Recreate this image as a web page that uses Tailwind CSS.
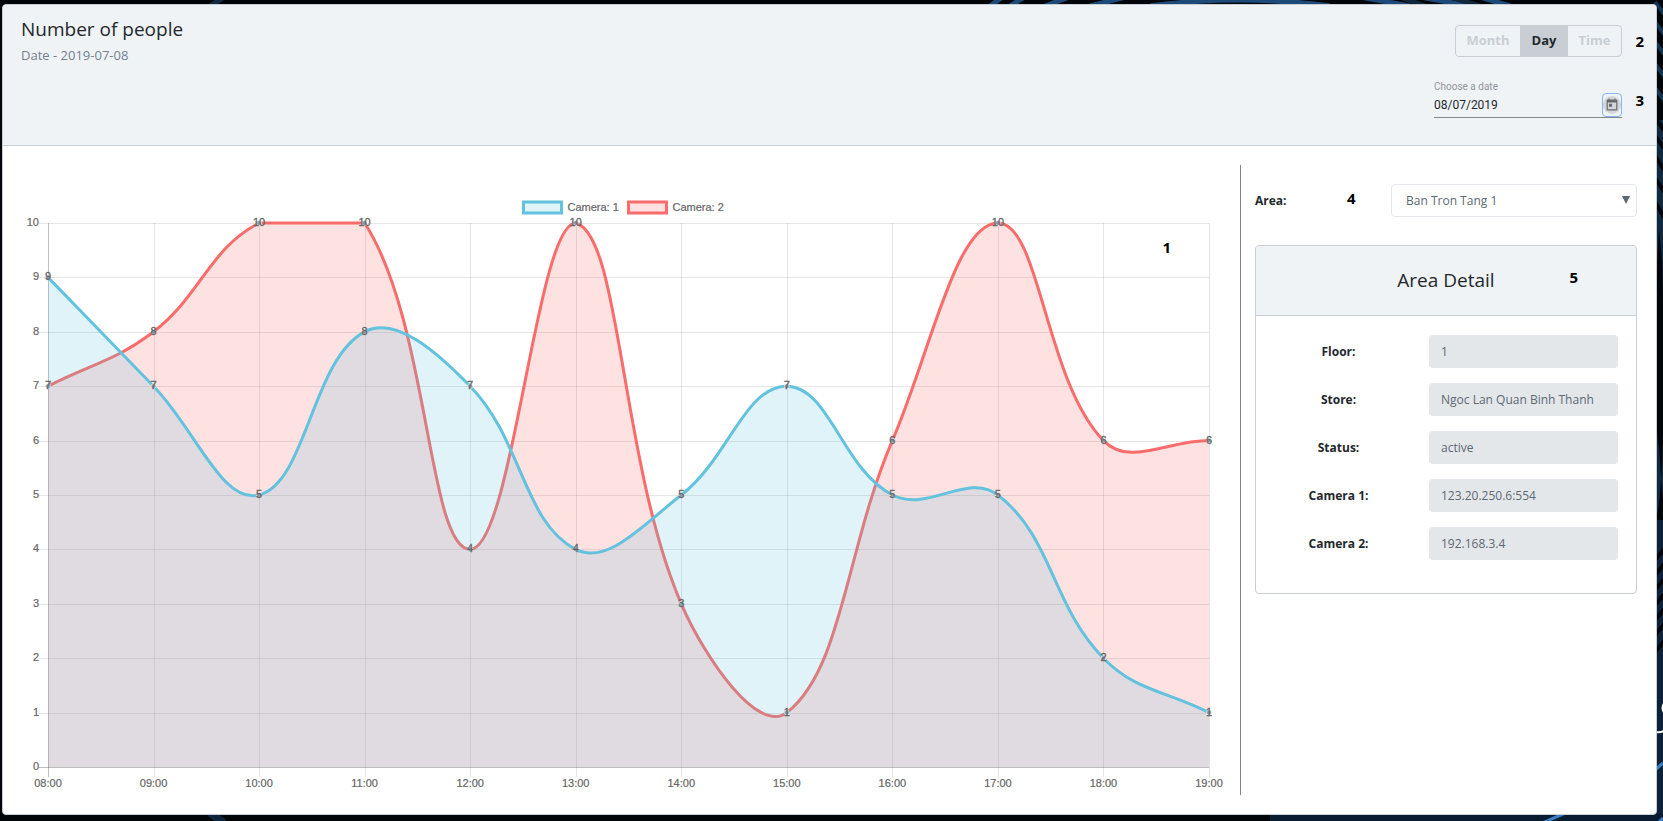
<!DOCTYPE html>
<html lang="en">
<head>
<meta charset="utf-8">
<title>Number of people</title>
<script src="https://cdn.jsdelivr.net/npm/@tailwindcss/browser@4"></script>
</head>
<body class="relative min-h-screen bg-[#020609] pt-1 pr-1.5 pb-1.5 pl-0.5 font-['Open_Sans','Noto_Sans',sans-serif] text-[13px] text-[#23282c]">
<svg class="absolute inset-0 h-full w-full" viewBox="0 0 1663 821" preserveAspectRatio="none" aria-hidden="true">
  <g fill="none" stroke="#1d4a78" stroke-width="5">
    <path d="M990 6 L1004 -4 M1010 6 L1026 -4 M1045 6 L1072 -4 M1090 6 L1130 -4 M1150 6 Q1240 -6 1330 6 M1360 -3 L1410 6 M1420 -3 L1470 6 M1480 -3 L1510 6" />
    <path d="M210 6 L226 -4" stroke="#132c44" />
    <path d="M1400 -3 L1425 6 M1450 -3 L1480 6" stroke="#10273c" />
  </g>
  <path d="M1656 120 H1663 V250 Q1663 350 1656 370 Z" fill="#10293f" />
  <path d="M1656 330 Q1657 440 1663 500 V440 Q1661 500 1656 520 Z" fill="#10293f" />
  <path d="M1656 520 H1663 V821 H1656 Z" fill="#0d2238" />
  <g fill="none" stroke="#153450" stroke-width="4">
    <path d="M1655 2 L1667 18 M1655 22 L1667 38 M1655 42 L1667 58 M1655 64 L1667 80 M1655 88 L1667 104" />
  </g>
  <g fill="none" stroke="#02060a" stroke-width="4">
    <path d="M1655 118 L1667 134 M1655 136 L1667 152 M1655 156 L1667 174 M1655 178 L1667 196 M1655 202 L1667 222" />
    <path d="M1655 560 L1667 546 M1655 575 L1667 561 M1655 590 L1667 576 M1655 605 L1667 591 M1655 620 L1667 606 M1655 635 L1667 621 M1655 652 L1667 638" />
  </g>
  <path d="M1655 350 Q1655 300 1659 230 L1662 260 Q1664 330 1663 440 Q1656 480 1655 350Z" fill="#02060a" />
  <path d="M1270 814 H1663 V821 H1270Z" fill="#0a1c30" />
  <path d="M1655 770 L1663 763 M1655 826 L1663 818 M1540 824 L1570 811" stroke="#3a7fc4" stroke-width="3" />
  <path d="M210 813 L224 823" stroke="#0e2438" stroke-width="8" />
  <path d="M1656 732 Q1660 733 1664 731 M1665 702 Q1660 708 1665 714" fill="none" stroke="#fff" stroke-width="2" />
</svg>

<main class="relative flex min-h-[811px] flex-col rounded border border-[#c8ced3] bg-white">
  <header class="flex min-h-[141px] justify-between rounded-t border-b border-[#c8ced3] bg-[#eff3f6] pr-3 pl-[18px]">
    <div class="pt-2.5">
      <h1 class="text-[19px] leading-7 font-medium">Number of people</h1>
      <p class="mt-0.5 text-[13px] leading-5 text-[#73818f]">Date - 2019-07-08</p>
    </div>
    <div class="flex w-[210px] flex-col pt-5">
      <div class="flex items-center justify-between">
        <div class="ml-[21px] flex h-8 overflow-hidden rounded border border-[#c8ced3] font-bold text-[#c8ced3]" role="group" aria-label="Range">
          <button type="button" class="w-16 px-2">Month</button>
          <button type="button" class="w-12 bg-[#c8ced3] px-2 text-[#23282c]">Day</button>
          <button type="button" class="w-[53px] px-2">Time</button>
        </div>
        <b class="text-[15px] text-black">2</b>
      </div>
      <div class="mt-6 flex items-start justify-between">
        <div class="w-[188px] border-b border-[#84878a] font-[Roboto,sans-serif]">
          <label for="date" class="block text-[10px] leading-3 text-[#929496]">Choose a date</label>
          <div class="flex h-6 items-center justify-between">
            <input id="date" type="text" value="08/07/2019" class="w-32 text-[12px] text-[#23282c] outline-none">
            <button type="button" aria-label="Open calendar" class="flex h-6 w-5 items-center justify-center rounded border border-[#8ab4f8] bg-[#eff3f6]">
              <svg class="h-4.5 w-4.5" viewBox="-3 -3 30 30" fill="#686b6e"><circle cx="12" cy="12" r="15" fill="#d3d6d9"/><path d="M19 3h-1V1h-2v2H8V1H6v2H5a2 2 0 0 0-2 2v14a2 2 0 0 0 2 2h14a2 2 0 0 0 2-2V5a2 2 0 0 0-2-2zm0 16H5V8h14v11zM7 10h5v5H7z"/></svg>
            </button>
          </div>
        </div>
        <b class="pt-2 text-[15px] text-black">3</b>
      </div>
    </div>
  </header>

  <div class="flex grow py-[19px] pr-[19px] pl-5">
    <section class="relative min-w-0 grow" aria-label="People per camera">
      <svg id="chart" class="block h-[629px] w-full font-['Liberation_Sans',sans-serif] text-[11px]"></svg>
      <b class="absolute top-[71px] right-[69px] text-[15px] text-black">1</b>
    </section>

    <aside class="w-[397px] shrink-0 border-l border-[#808080] pt-[19px] pl-3.5">
      <div class="flex h-[33px] items-center">
        <label for="area" class="w-[92px] text-[12px] font-bold">Area:</label>
        <b class="w-11 pb-1 text-[15px] text-black">4</b>
        <div class="relative grow">
          <select id="area" class="h-[33px] w-full appearance-none rounded border border-[#e4e7ea] bg-white pl-3.5 text-[12px] text-[#5c6873]">
            <option>Ban Tron Tang 1</option>
          </select>
          <svg class="pointer-events-none absolute top-3 right-[7px] h-2 w-2" viewBox="0 0 8 8" fill="#5c6873"><path d="M0 0h8L4 8z"/></svg>
        </div>
      </div>
      <div class="mt-7 rounded border border-[#c8ced3]">
        <div class="relative flex h-[70px] items-center justify-center rounded-t border-b border-[#c8ced3] bg-[#eff3f6]">
          <h2 class="text-[19px] font-medium">Area Detail</h2>
          <b class="absolute top-5 right-[58px] text-[15px] text-black">5</b>
        </div>
        <form class="flex flex-col gap-[15px] pt-[19px] pr-[18px] pb-[33px] text-[12px]">
          <div class="flex items-center"><label for="floor" class="grow pr-2 text-center font-bold">Floor:</label><input id="floor" readonly value="1" class="h-[33px] w-[189px] rounded bg-[#e4e7ea] px-3 text-[#5c6873]"></div>
          <div class="flex items-center"><label for="store" class="grow pr-2 text-center font-bold">Store:</label><input id="store" readonly value="Ngoc Lan Quan Binh Thanh" class="h-[33px] w-[189px] rounded bg-[#e4e7ea] px-3 text-[#5c6873]"></div>
          <div class="flex items-center"><label for="status" class="grow pr-2 text-center font-bold">Status:</label><input id="status" readonly value="active" class="h-[33px] w-[189px] rounded bg-[#e4e7ea] px-3 text-[#5c6873]"></div>
          <div class="flex items-center"><label for="cam1" class="grow pr-2 text-center font-bold">Camera 1:</label><input id="cam1" readonly value="123.20.250.6:554" class="h-[33px] w-[189px] rounded bg-[#e4e7ea] px-3 text-[#5c6873]"></div>
          <div class="flex items-center"><label for="cam2" class="grow pr-2 text-center font-bold">Camera 2:</label><input id="cam2" readonly value="192.168.3.4" class="h-[33px] w-[189px] rounded bg-[#e4e7ea] px-3 text-[#5c6873]"></div>
        </form>
      </div>
    </aside>
  </div>
</main>

<script>
const hours = ['08:00','09:00','10:00','11:00','12:00','13:00','14:00','15:00','16:00','17:00','18:00','19:00'];
const series = [
  { name: 'Camera: 1', color: '#63c2de', data: [9,7,5,8,7,4,5,7,5,5,2,1] },
  { name: 'Camera: 2', color: '#f86c6b', data: [7,8,10,10,4,10,3,1,6,10,6,6] },
];
const svg = document.getElementById('chart');

// Smooth line through the points, control points kept inside the plot area.
function curve(pts, tension, top, bottom) {
  const clamp = y => Math.min(bottom, Math.max(top, y));
  const cps = pts.map((p, i) => {
    const a = pts[i - 1] || p, b = pts[i + 1] || p;
    const d1 = Math.hypot(p[0] - a[0], p[1] - a[1]), d2 = Math.hypot(b[0] - p[0], b[1] - p[1]);
    const fa = tension * d1 / (d1 + d2), fb = tension * d2 / (d1 + d2);
    return {
      prev: [p[0] - fa * (b[0] - a[0]), clamp(p[1] - fa * (b[1] - a[1]))],
      next: [p[0] + fb * (b[0] - a[0]), clamp(p[1] + fb * (b[1] - a[1]))],
    };
  });
  return pts.slice(1).reduce((d, p, i) => d + ` C${cps[i].next} ${cps[i + 1].prev} ${p}`, `M${pts[0]}`);
}

function draw() {
  const W = svg.clientWidth;
  const left = 25, right = W - 31, top = 58, bottom = 602;
  const X = i => left + (right - left) * i / (hours.length - 1);
  const Y = v => bottom - (bottom - top) * v / 10;
  const snap = n => Math.round(n) + 0.5;
  const ink = 'fill="#666" stroke="#666" stroke-width="0.2"';
  let out = '';
  hours.forEach((h, i) => {
    out += `<path d="M${snap(X(i))} ${top}V${bottom + 10}" stroke="#000" stroke-opacity="${i ? 0.1 : 0.25}"/>`;
    out += `<text x="${X(i)}" y="622" text-anchor="middle" ${ink}>${h}</text>`;
  });
  for (let v = 0; v <= 10; v++) {
    out += `<path d="M${left - 9} ${snap(Y(v))}H${right}" stroke="#000" stroke-opacity="${v ? 0.1 : 0.25}"/>`;
    out += `<text x="${left - 9}" y="${Y(v) + 3}" text-anchor="end" ${ink}>${v}</text>`;
  }
  [...series].reverse().forEach(s => {
    const pts = s.data.map((v, i) => [X(i), Y(v)]);
    const d = curve(pts, 0.4, top, bottom);
    out += `<path d="${d} L${right} ${bottom} L${left} ${bottom}Z" fill="${s.color}" fill-opacity="0.2"/>`;
    out += `<path d="${d}" fill="none" stroke="${s.color}" stroke-width="3"/>`;
    pts.forEach(p => out += `<circle cx="${p[0]}" cy="${p[1]}" r="2.5" fill="#8f9ba8" stroke="#fff" stroke-opacity="0.6"/>`);
  });
  series.forEach(s => s.data.forEach((v, i) => {
    out += `<text x="${X(i)}" y="${Y(v) + 3}" text-anchor="middle" fill="#666" stroke="#666" stroke-width="0.3">${v}</text>`;
  }));
  series.forEach((s, i) => {
    const x = W / 2 - 109 + i * 105;
    out += `<rect x="${x + 1}" y="37" width="38" height="11" fill="${s.color}" fill-opacity="0.2" stroke="${s.color}" stroke-width="3"/>`;
    out += `<text x="${x + 45}" y="46" ${ink}>${s.name}</text>`;
  });
  svg.innerHTML = out;
}
new ResizeObserver(draw).observe(svg.parentElement);
</script>
</body>
</html>
